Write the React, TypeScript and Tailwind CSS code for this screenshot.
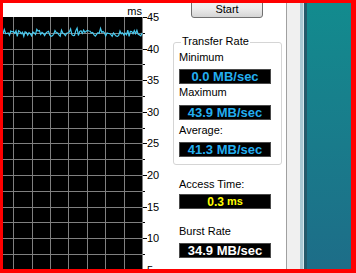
const ticks = Array.from({ length: 17 }, (_, i) => i * 15.8);
const labels = [45, 40, 35, 30, 25, 20, 15, 10, 5];
const vLines = Array.from({ length: 8 }, (_, i) => 140 - i * 18.4);

function wavePoints() {
  const pts: string[] = [];
  let seed = 7;
  const rand = () => {
    seed = (seed * 9301 + 49297) % 233280;
    return seed / 233280;
  };
  for (let x = 0; x <= 140; x += 1.3) {
    const spike = rand() < 0.15 ? -2.5 : 0;
    const y = 16.5 + (rand() - 0.5) * 6 + spike;
    pts.push(`${x.toFixed(1)},${y.toFixed(1)}`);
  }
  return pts.join(" ");
}

function Readout({ children, className }: { children: React.ReactNode; className: string }) {
  return (
    <div
      className={`w-[92px] h-[15px] bg-black border border-[#4a4a4a] flex items-center justify-center font-bold text-[13px] leading-none ${className}`}
    >
      {children}
    </div>
  );
}

export default function App() {
  return (
    <div className="w-[356px] h-[273px] overflow-hidden bg-white flex border-[#ff0000] border-t-[3px] border-l-[3px] border-r-[5px] border-b-[4px] font-['Liberation_Sans',Arial,sans-serif] text-black">
      {/* Chart */}
      <div className="w-[157px] shrink-0 flex flex-col">
        <div className="h-[14px] shrink-0 flex justify-end pr-[18px] pt-[2px] text-[11px] leading-[13px]">ms</div>
        <div className="flex flex-1">
          <svg width={140} height={252} className="block shrink-0 bg-black" shapeRendering="crispEdges">
            {vLines.map((x) => (
              <line key={x} x1={Math.round(x) - 0.5} x2={Math.round(x) - 0.5} y1={0} y2={252} stroke="#808080" strokeWidth={1} />
            ))}
            {ticks.slice(1).map((y) => (
              <line key={y} x1={0} x2={140} y1={Math.round(y) + 0.5} y2={Math.round(y) + 0.5} stroke="#808080" strokeWidth={1} />
            ))}
            <polyline points={wavePoints()} fill="none" stroke="#46caf0" strokeWidth={1.2} shapeRendering="auto" />
          </svg>
          <div className="relative w-[17px] text-[11px] leading-[13px]">
            {ticks.map((y, i) => (
              <div
                key={y}
                className={`absolute left-0 h-px bg-black ${i % 2 === 0 ? "w-[4px]" : "w-[2px]"}`}
                style={{ top: Math.round(y) }}
              />
            ))}
            {labels.map((v, i) => (
              <span key={v} className="absolute left-[4px]" style={{ top: i * 31.6 - 6 }}>
                {v}
              </span>
            ))}
          </div>
        </div>
      </div>

      {/* Side panel */}
      <div className="w-[126px] shrink-0 flex flex-col text-[11px] leading-[13px]">
        <button className="ml-[31px] mt-[-3px] w-[72px] h-[18px] shrink-0 rounded-[3px] border border-[#707070] bg-linear-to-b from-[#f4f4f4] via-[#ebebeb] to-[#d5d5d5] flex items-center justify-center pt-[1px]">
          Start
        </button>

        <div className="relative ml-[13px] mt-[24px] w-[109px] border border-[#d5d5d5] rounded-[3px] pl-[5px] pb-[7px]">
          <span className="absolute left-[7px] top-[-8px] bg-white px-[1px]">Transfer Rate</span>
          <div className="mt-[8px]">Minimum</div>
          <Readout className="mt-[5px] text-[#23aef0]">0.0 MB/sec</Readout>
          <div className="mt-[2px]">Maximum</div>
          <Readout className="mt-[6px] text-[#23aef0]">43.9 MB/sec</Readout>
          <div className="mt-[4px]">Average:</div>
          <Readout className="mt-[5px] text-[#23aef0]">41.3 MB/sec</Readout>
        </div>

        <div className="ml-[19px] mt-[13px]">Access Time:</div>
        <Readout className="ml-[19px] mt-[3px] text-[#ffff00]">
          <span className="text-[12px]">0.3</span>
          <span className="text-[11px] ml-[3px]">ms</span>
        </Readout>

        <div className="ml-[19px] mt-[16px]">Burst Rate</div>
        <Readout className="ml-[19px] mt-[5px] text-white">34.9 MB/sec</Readout>
      </div>

      {/* Window edge */}
      <div className="w-px shrink-0 bg-[#a0a0a0]" />
      <div className="w-[13px] shrink-0 bg-[#f0f0f0]" />
      <div className="w-[3px] shrink-0 bg-[#a8c8d3]" />
      <div className="w-px shrink-0 bg-[#d8e8ee]" />
      <div className="w-[3px] shrink-0 bg-[#24596a]" />
      <div className="flex-1 bg-linear-to-b from-[#128b8e] to-[#1d6d88]" />
    </div>
  );
}
